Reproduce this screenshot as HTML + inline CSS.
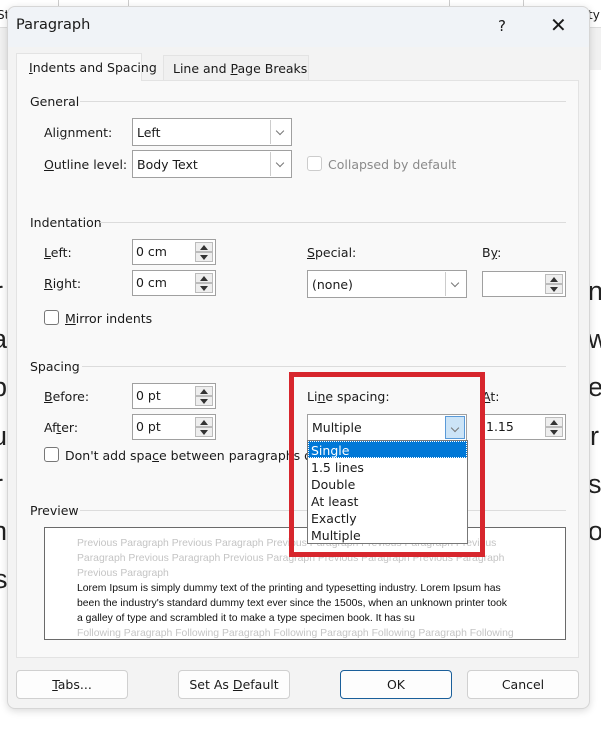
<!DOCTYPE html>
<html><head><meta charset="utf-8"><style>
*{margin:0;padding:0;box-sizing:border-box}
body{width:601px;height:730px;background:#fff;position:relative;overflow:hidden;font-family:"DejaVu Sans","Liberation Sans",sans-serif;font-size:12.5px;color:#1a1a1a}
.a{position:absolute;white-space:nowrap}
.big{font-family:"Liberation Sans",sans-serif;font-size:27px;color:#222}
.dlg{position:absolute;left:7px;top:6px;width:583px;height:703px;background:#f3f3f3;border:1px solid #d6d6d6;border-radius:8px;box-shadow:0 2px 8px rgba(0,0,0,.15)}
.panel{position:absolute;left:16px;top:80px;width:563px;height:578px;background:#f9f9f9;border:1px solid #e3e3e3}
.line{position:absolute;height:1px;background:#dcdcdc}
.box{position:absolute;background:#fff;border:1px solid #a0a0a0}
.dd{position:absolute;top:1px;right:1px;bottom:1px;width:20px;border-left:1px solid #ccc;background:#fff}
.dd:after{content:"";position:absolute;left:6px;top:8px;width:5px;height:5px;border-right:1px solid #777;border-bottom:1px solid #777;transform:rotate(45deg)}
.sp{position:absolute;right:2px;width:18px;height:10px;background:#eee;border:1px solid #bbb}
.sp.u{top:2px}.sp.d{bottom:2px}
.sp.u:after{content:"";position:absolute;left:4px;top:2px;border-left:4px solid transparent;border-right:4px solid transparent;border-bottom:5px solid #333}
.sp.d:after{content:"";position:absolute;left:4px;top:2px;border-left:4px solid transparent;border-right:4px solid transparent;border-top:5px solid #333}
.cb{position:absolute;width:15px;height:15px;border:1px solid #777;border-radius:3px;background:#fff}
.btn{position:absolute;top:670px;width:112px;height:29px;background:#fdfdfd;border:1px solid #d0d0d0;border-radius:4px;text-align:center;line-height:27px}
.pv{position:absolute;left:77px;font-family:"Liberation Sans",sans-serif;font-size:10.4px;color:#c4c4c4}
.pv.k{color:#111}
u{text-decoration:underline}
.it{position:absolute;left:311px;font-size:12.5px}
</style></head><body>
<div class="a" style="left:0;top:0;width:601px;height:28px;border-bottom:1px solid #ddd"></div>
<div class="a" style="left:58px;top:0;width:1px;height:28px;background:#ccc"></div>
<div class="a" style="left:128px;top:0;width:1px;height:28px;background:#ccc"></div>
<div class="a" style="left:449px;top:0;width:1px;height:28px;background:#ccc"></div>
<div class="a" style="left:523px;top:0;width:1px;height:28px;background:#ccc"></div>
<div class="a" style="left:0;top:28px;width:601px;height:42px;background:#f1f1f1"></div>
<div class="a" style="left:-3px;top:8px;font-size:12px">St</div>
<div class="a" style="left:588px;top:8px;font-size:12px">ty</div>
<div class="a big" style="left:-6px;top:276px">r</div>
<div class="a big" style="left:-8px;top:324px">a</div>
<div class="a big" style="left:-8px;top:372px">p</div>
<div class="a big" style="left:-8px;top:421px">u</div>
<div class="a big" style="left:-6px;top:469px">r</div>
<div class="a big" style="left:-8px;top:516px">n</div>
<div class="a big" style="left:-6px;top:564px">si</div>
<div class="a big" style="left:588px;top:276px">nd</div>
<div class="a big" style="left:588px;top:324px">w</div>
<div class="a big" style="left:588px;top:372px">e</div>
<div class="a big" style="left:590px;top:421px">r</div>
<div class="a big" style="left:588px;top:469px">s</div>
<div class="a big" style="left:588px;top:516px">o</div>

<div class="dlg"></div>
<div class="a" style="left:8px;top:7px;width:581px;height:40px;background:#f0f3f7;border-radius:8px 8px 0 0"></div>
<div class="a" style="left:16px;top:17px;font-size:14.5px">Paragraph</div>
<div class="a" style="left:498px;top:17px;font-size:15px">?</div>
<div class="a" style="left:550px;top:13px;font-size:20px;font-weight:300">✕</div>

<div class="panel"></div>
<div class="a" style="left:16px;top:53px;width:126px;height:28px;background:#f9f9f9;border:1px solid #e3e3e3;border-bottom:none"></div>
<div class="a" style="left:29px;top:60px"><u>I</u>ndents and Spacing</div>
<div class="a" style="left:163px;top:55px;width:146px;height:25px;background:#f0f0f0;border:1px solid #e3e3e3;border-bottom:none"></div>
<div class="a" style="left:173px;top:61px">Line and <u>P</u>age Breaks</div>

<div class="a" style="left:30px;top:94px">General</div><div class="line" style="left:80px;top:101px;width:486px"></div>
<div class="a" style="left:44px;top:125px">Ali<u>g</u>nment:</div>
<div class="box" style="left:132px;top:118px;width:160px;height:28px"><span class="a" style="left:4px;top:6px">Left</span><div class="dd"></div></div>
<div class="a" style="left:44px;top:157px"><u>O</u>utline level:</div>
<div class="box" style="left:132px;top:150px;width:160px;height:28px"><span class="a" style="left:4px;top:6px">Body Text</span><div class="dd"></div></div>
<div class="cb" style="left:307px;top:156px;border-color:#ccc"></div>
<div class="a" style="left:328px;top:157px;color:#8a8a8a">Collapsed by default</div>

<div class="a" style="left:30px;top:215px">Indentation</div><div class="line" style="left:100px;top:222px;width:466px"></div>
<div class="a" style="left:44px;top:245px"><u>L</u>eft:</div>
<div class="box" style="left:132px;top:239px;width:84px;height:26px"><span class="a" style="left:3px;top:4px">0 cm</span><div class="sp u"></div><div class="sp d"></div></div>
<div class="a" style="left:44px;top:276px"><u>R</u>ight:</div>
<div class="box" style="left:132px;top:270px;width:84px;height:26px"><span class="a" style="left:3px;top:4px">0 cm</span><div class="sp u"></div><div class="sp d"></div></div>
<div class="a" style="left:307px;top:245px"><u>S</u>pecial:</div>
<div class="box" style="left:307px;top:270px;width:160px;height:28px"><span class="a" style="left:4px;top:6px">(none)</span><div class="dd"></div></div>
<div class="a" style="left:482px;top:245px">B<u>y</u>:</div>
<div class="box" style="left:482px;top:271px;width:84px;height:26px"><div class="sp u"></div><div class="sp d"></div></div>
<div class="cb" style="left:44px;top:310px"></div>
<div class="a" style="left:65px;top:311px"><u>M</u>irror indents</div>

<div class="a" style="left:30px;top:359px">Spacing</div><div class="line" style="left:82px;top:366px;width:484px"></div>
<div class="a" style="left:44px;top:389px"><u>B</u>efore:</div>
<div class="box" style="left:132px;top:383px;width:84px;height:26px"><span class="a" style="left:3px;top:4px">0 pt</span><div class="sp u"></div><div class="sp d"></div></div>
<div class="a" style="left:44px;top:420px">Af<u>t</u>er:</div>
<div class="box" style="left:132px;top:414px;width:84px;height:26px"><span class="a" style="left:3px;top:4px">0 pt</span><div class="sp u"></div><div class="sp d"></div></div>
<div class="a" style="left:307px;top:389px">Li<u>n</u>e spacing:</div>
<div class="box" style="left:307px;top:414px;width:160px;height:27px"><span class="a" style="left:4px;top:5px">Multiple</span><div class="dd" style="background:#cce4f7;border:1px solid #5a9ad8;width:20px"></div></div>
<div class="a" style="left:482px;top:389px"><u>A</u>t:</div>
<div class="box" style="left:482px;top:414px;width:84px;height:26px"><span class="a" style="left:3px;top:4px">1.15</span><div class="sp u"></div><div class="sp d"></div></div>
<div class="cb" style="left:44px;top:447px"></div>
<div class="a" style="left:65px;top:448px">Don't add spa<u>c</u>e between paragraphs of</div>

<div class="a" style="left:30px;top:503px">Preview</div><div class="line" style="left:80px;top:510px;width:486px"></div>
<div class="a" style="left:44px;top:527px;width:522px;height:113px;background:#fff;border:1px solid #6a6a6a"></div>
<div class="pv" style="top:538px">Previous Paragraph Previous Paragraph Previous Paragraph Previous Paragraph Previous</div>
<div class="pv" style="top:553px">Paragraph Previous Paragraph Previous Paragraph Previous Paragraph Previous Paragraph</div>
<div class="pv" style="top:568px">Previous Paragraph</div>
<div class="pv k" style="top:583px">Lorem Ipsum is simply dummy text of the printing and typesetting industry. Lorem Ipsum has</div>
<div class="pv k" style="top:598px">been the industry's standard dummy text ever since the 1500s, when an unknown printer took</div>
<div class="pv k" style="top:613px">a galley of type and scrambled it to make a type specimen book. It has su</div>
<div class="pv" style="top:628px">Following Paragraph Following Paragraph Following Paragraph Following Paragraph Following</div>

<div class="a" style="left:289px;top:372px;width:196px;height:185px;border:5px solid #d7262d"></div>
<div class="a" style="left:307px;top:440px;width:161px;height:104px;background:#fff;border:1px solid #777"></div>
<div class="a" style="left:308px;top:441px;width:159px;height:17px;background:#0078d7;border:1px dotted #fff"></div>
<div class="it" style="top:443px;color:#fff">Single</div>
<div class="it" style="top:460px">1.5 lines</div>
<div class="it" style="top:477px">Double</div>
<div class="it" style="top:494px">At least</div>
<div class="it" style="top:511px">Exactly</div>
<div class="it" style="top:528px">Multiple</div>

<div class="btn" style="left:16px"><u>T</u>abs...</div>
<div class="btn" style="left:178px">Set As <u>D</u>efault</div>
<div class="btn" style="left:340px;border:1px solid #1a5f9a">OK</div>
<div class="btn" style="left:467px">Cancel</div>
</body></html>
